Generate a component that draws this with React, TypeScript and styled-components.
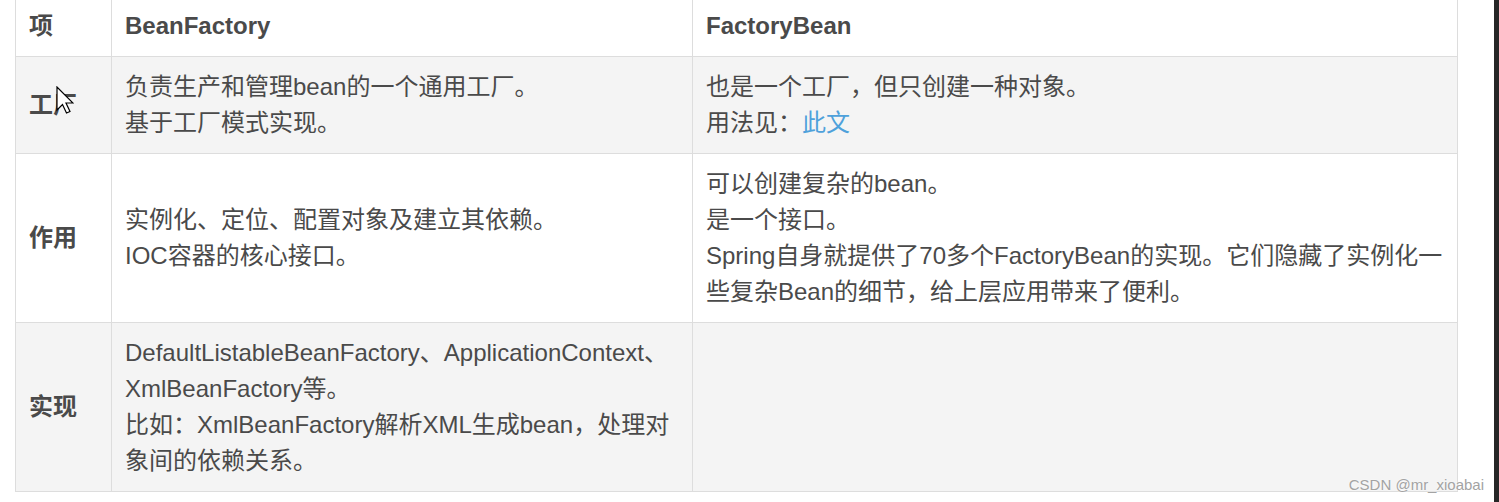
import React from "react";
import styled, { createGlobalStyle } from "styled-components";

const GlobalStyle = createGlobalStyle`
  body {
    margin: 0;
    background: #ffffff;
    font-family: "Liberation Sans", "Noto Sans CJK SC", sans-serif;
  }
`;

const Page = styled.div`
  display: flex;
  height: 502px;
  overflow: hidden;
  background: #ffffff;
`;

const Content = styled.div`
  position: relative;
  flex: 1;
  padding-left: 15px;
`;

const EdgeStrip = styled.div`
  width: 5px;
  background: #262626;
`;

const Table = styled.table`
  margin-top: -5px;
  width: 1443px;
  border-collapse: collapse;
  table-layout: fixed;
`;

const TableRow = styled.tr<{ $striped?: boolean }>`
  background: ${(p) => (p.$striped ? "#f4f4f4" : "#ffffff")};
`;

const cellBase = `
  border: 1px solid #dddddd;
  padding: 12px 10px 12px 13px;
  font-size: 24px;
  line-height: 36px;
  color: #4a4a4a;
  text-align: left;
  vertical-align: middle;
`;

const HeadCell = styled.th`
  ${cellBase}
  font-weight: bold;
`;

const LabelCell = styled.td`
  ${cellBase}
  font-weight: bold;
`;

const Cell = styled.td`
  ${cellBase}
`;

const Line = styled.div`
  white-space: nowrap;
`;

const DocLink = styled.a`
  color: #4ea1db;
  text-decoration: none;
`;

const Cursor = styled.svg`
  position: absolute;
  left: 56px;
  top: 86px;
`;

const Watermark = styled.div`
  position: absolute;
  right: 10px;
  bottom: 9px;
  font-family: "Liberation Sans", Arial, sans-serif;
  font-size: 15px;
  line-height: 16px;
  color: #a3a3a3;
  text-shadow: 0 0 2px #ffffff;
`;

type Row = {
  label: string;
  factory: React.ReactNode[];
  bean: React.ReactNode[];
};

const rows: Row[] = [
  {
    label: "工厂",
    factory: ["负责生产和管理bean的一个通用工厂。", "基于工厂模式实现。"],
    bean: [
      "也是一个工厂，但只创建一种对象。",
      <>
        用法见：<DocLink href="#">此文</DocLink>
      </>,
    ],
  },
  {
    label: "作用",
    factory: ["实例化、定位、配置对象及建立其依赖。", "IOC容器的核心接口。"],
    bean: [
      "可以创建复杂的bean。",
      "是一个接口。",
      "Spring自身就提供了70多个FactoryBean的实现。它们隐藏了实例化一",
      "些复杂Bean的细节，给上层应用带来了便利。",
    ],
  },
  {
    label: "实现",
    factory: [
      "DefaultListableBeanFactory、ApplicationContext、",
      "XmlBeanFactory等。",
      "比如：XmlBeanFactory解析XML生成bean，处理对",
      "象间的依赖关系。",
    ],
    bean: [],
  },
];

const Lines = ({ items }: { items: React.ReactNode[] }) => (
  <>
    {items.map((item, index) => (
      <Line key={index}>{item}</Line>
    ))}
  </>
);

const App = () => {
  return (
    <Page>
      <GlobalStyle />
      <Content>
        <Table>
          <colgroup>
            <col style={{ width: 96 }} />
            <col style={{ width: 581 }} />
            <col style={{ width: 765 }} />
          </colgroup>
          <thead>
            <TableRow>
              <HeadCell>项</HeadCell>
              <HeadCell>BeanFactory</HeadCell>
              <HeadCell>FactoryBean</HeadCell>
            </TableRow>
          </thead>
          <tbody>
            {rows.map((row, index) => (
              <TableRow key={row.label} $striped={index % 2 === 0}>
                <LabelCell>{row.label}</LabelCell>
                <Cell>
                  <Lines items={row.factory} />
                </Cell>
                <Cell>
                  <Lines items={row.bean} />
                </Cell>
              </TableRow>
            ))}
          </tbody>
        </Table>

        <Cursor width="18" height="28" viewBox="0 0 18 28">
          <path
            d="M1 1 L1 24 L6.5 18.5 L10.5 27 L14 25.5 L10 17 L17 17 Z"
            fill="#ffffff"
            stroke="#000000"
            strokeWidth="1.2"
            strokeLinejoin="miter"
          />
        </Cursor>

        <Watermark>CSDN @mr_xioabai</Watermark>
      </Content>
      <EdgeStrip />
    </Page>
  );
};

export default App;
